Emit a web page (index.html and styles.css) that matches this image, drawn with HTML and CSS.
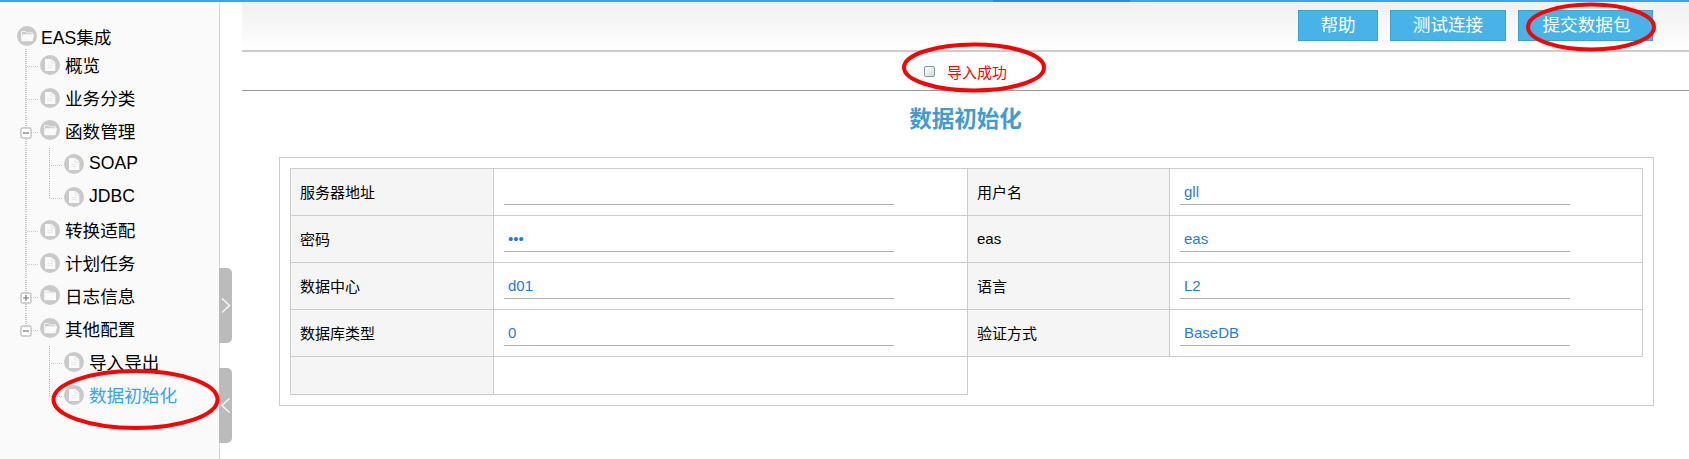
FILE: index.html
```html
<!DOCTYPE html>
<html lang="zh-CN">
<head>
<meta charset="utf-8">
<title>数据初始化</title>
<link rel="stylesheet" href="styles.css">
</head>
<body>
<svg class="defs" width="0" height="0">
  <symbol id="doc" viewBox="0 0 20 20"><circle cx="10" cy="10" r="10" fill="#c9c9c9"/><path d="M5 4h6.5l3.8 3.6V16H5z" fill="#fafafa"/><path d="M11.2 4.3v3.8h3.9" fill="none" stroke="#e4e4e4"/><path d="M7.5 10.5h5M7.5 12.5h5" stroke="#e9e9e9"/></symbol>
  <symbol id="open" viewBox="0 0 20 20"><circle cx="10" cy="10" r="10" fill="#c9c9c9"/><path d="M4.5 13.5V5.5h4l1 1.3h6v1.4" fill="none" stroke="#f2f2f2"/><path d="M5.6 8.3h11.6l-1.7 6.9H4.3z" fill="#fafafa"/></symbol>
  <symbol id="closed" viewBox="0 0 20 20"><circle cx="10" cy="10" r="10" fill="#c9c9c9"/><path d="M4.2 5.2h4.4l1 1.5h6.2v1H4.2z" fill="#f2f2f2"/><path d="M4.2 8h11.8v7.2H4.2z" fill="#fafafa"/></symbol>
  <symbol id="minus" viewBox="0 0 12 12"><rect x="1" y="1" width="10" height="10" rx="1.5" fill="#fff" stroke="#c4c4c4" stroke-width="1.4"/><path d="M3 6h6" stroke="#777" stroke-width="1.2"/></symbol>
  <symbol id="plus" viewBox="0 0 12 12"><rect x="1" y="1" width="10" height="10" rx="1.5" fill="#fff" stroke="#c4c4c4" stroke-width="1.4"/><path d="M3 6h6M6 3v6" stroke="#777" stroke-width="1.2"/></symbol>
</svg>
<div class="topbar"><span class="topbar-active"></span></div>
<div class="layout">
  <nav class="sidebar">
    <div class="root"><svg class="icon"><use href="#open"/></svg><span>EAS集成</span></div>
    <ul class="tree">
      <li class="node"><svg class="icon"><use href="#doc"/></svg><span>概览</span></li>
      <li class="node"><svg class="icon"><use href="#doc"/></svg><span>业务分类</span></li>
      <li class="node folder"><svg class="toggle"><use href="#minus"/></svg><svg class="icon"><use href="#open"/></svg><span>函数管理</span></li>
      <li class="node child latin"><svg class="icon"><use href="#doc"/></svg><span>SOAP</span></li>
      <li class="node child last latin"><svg class="icon"><use href="#doc"/></svg><span>JDBC</span></li>
      <li class="node"><svg class="icon"><use href="#doc"/></svg><span>转换适配</span></li>
      <li class="node"><svg class="icon"><use href="#doc"/></svg><span>计划任务</span></li>
      <li class="node folder"><svg class="toggle"><use href="#plus"/></svg><svg class="icon"><use href="#closed"/></svg><span>日志信息</span></li>
      <li class="node folder end"><svg class="toggle"><use href="#minus"/></svg><svg class="icon"><use href="#open"/></svg><span>其他配置</span></li>
      <li class="node child tail"><svg class="icon"><use href="#doc"/></svg><span>导入导出</span></li>
      <li class="node child last tail current"><svg class="icon"><use href="#doc"/></svg><span>数据初始化</span></li>
    </ul>
  </nav>
  <div class="handles">
    <div class="handle"><svg width="13" height="75"><path d="M3 30.5l7.5 7-7.5 7" /></svg></div>
    <div class="handle"><svg width="13" height="75"><path d="M10.5 30.5l-7.5 7 7.5 7" /></svg></div>
  </div>
  <main class="main">
    <header class="toolbar">
      <button class="btn help">帮助</button>
      <button class="btn test">测试连接</button>
      <button class="btn submit">提交数据包</button>
    </header>
    <div class="message"><span class="bullet"></span><span>导入成功</span></div>
    <h1 class="title">数据初始化</h1>
    <section class="panel">
      <table class="form">
        <colgroup><col class="c1"><col class="c2"><col class="c3"><col class="c4"></colgroup>
        <tr><th>服务器地址</th><td><div class="field"></div></td><th>用户名</th><td><div class="field">gll</div></td></tr>
        <tr><th>密码</th><td><div class="field">•••</div></td><th>eas</th><td><div class="field">eas</div></td></tr>
        <tr><th>数据中心</th><td><div class="field">d01</div></td><th>语言</th><td><div class="field">L2</div></td></tr>
        <tr><th>数据库类型</th><td><div class="field">0</div></td><th>验证方式</th><td><div class="field">BaseDB</div></td></tr>
        <tr class="blank"><th></th><td></td></tr>
      </table>
    </section>
  </main>
</div>
<svg class="marks" width="1689" height="459">
  <ellipse cx="135.5" cy="399.5" rx="82" ry="28.5"/>
  <ellipse cx="974" cy="67.5" rx="70" ry="23"/>
  <ellipse cx="1591" cy="27" rx="63" ry="22.5"/>
</svg>
</body>
</html>
```
FILE: styles.css
```css
* { box-sizing: border-box; }
body { margin: 0; height: 459px; overflow: hidden; background: #fff; color: #000; font-family: "Liberation Sans", "Noto Sans CJK SC", sans-serif; }
.defs { position: absolute; }
.topbar { height: 2px; background: #36a5f5; padding-left: 993px; }
.topbar-active { display: block; width: 137px; height: 2px; background: #1f8fe0; }
.layout { display: flex; height: 457px; }
.sidebar { width: 220px; flex: none; background: #fafafa; border-right: 1px solid #d9d9d9; font-size: 17.6px; line-height: 33px; white-space: nowrap; }
.root { display: flex; height: 47px; padding: 24px 0 0 17px; gap: 4px; }
.root span { margin-top: -4px; }
.icon { width: 20px; height: 20px; flex: none; display: block; }
.tree { list-style: none; margin: 0; padding: 0; }
.node { position: relative; display: flex; height: 33px; padding: 6px 0 0 40px; gap: 5px; }
.node span { margin-top: -5px; }
.node.latin span { margin-top: -7px; }
.folder { padding-top: 5px; }
.folder span { margin-top: -4px; }
.node.child { padding-left: 64px; }
.node::before { content: ""; position: absolute; left: 25px; top: 0; width: 14px; height: 32px; background: repeating-linear-gradient(to bottom, #c8c8c8 0 1px, transparent 1px 2px) 0 0 / 2px 100% no-repeat, repeating-linear-gradient(to right, #c8c8c8 0 1px, transparent 1px 2px) 2px 17px / 12px 1px no-repeat; }
.node.child::before { background: repeating-linear-gradient(to bottom, #c8c8c8 0 1px, transparent 1px 2px) 0 0 / 2px 100% no-repeat; }
.node.end::before { height: 18px; }
.node.tail::before { display: none; }
.child::after { content: ""; position: absolute; left: 49px; top: 0; width: 14px; height: 32px; background: repeating-linear-gradient(to bottom, #b0b0b0 0 1px, transparent 1px 2px) 0 0 / 1px 100% no-repeat, repeating-linear-gradient(to right, #c8c8c8 0 1px, transparent 1px 2px) 2px 17px / 12px 1px no-repeat; }
.child.last::after { height: 18px; }
.toggle { position: absolute; left: 20px; top: 12px; width: 12px; height: 12px; z-index: 1; }
.current { color: #36a3f1; }
.handles { width: 22px; flex: none; display: flex; flex-direction: column; gap: 25px; padding-top: 266px; margin-left: -1px; }
.handle { width: 13px; height: 75px; background: #bbb; border-radius: 0 5px 5px 0; }
.handle path { fill: none; stroke: #f4f4f4; stroke-width: 1.6; }
.main { flex: 1; margin-left: 1px; min-width: 0; }
.toolbar { height: 50px; background: linear-gradient(#f0f0f0, #fff 48px); border-bottom: 2px solid #ccc; display: flex; justify-content: flex-end; gap: 12px; padding: 8px 36px 0 0; }
.btn { height: 31px; padding: 0 0 1px; border: 1px solid #38a2d3; background: #47b3e8; color: #fff; font: 17.6px/26px "Liberation Sans", "Noto Sans CJK SC", sans-serif; }
.help { width: 80px; }
.test { width: 116px; }
.submit { width: 135px; padding-left: 2px; }
.message { height: 39px; border-bottom: 1px solid #999; padding-left: 682px; display: flex; align-items: center; gap: 12px; font-size: 15px; color: #f00; }
.bullet { width: 11px; height: 11px; border: 1px solid #7c9ab8; border-radius: 2px; background: linear-gradient(135deg, #fff, #ddd8cc); }
.title { margin: 0; height: 66px; padding-top: 12px; text-align: center; font-size: 22.5px; line-height: 34px; color: #429ccd; }
.panel { margin: 0 35px 0 37px; border: 1px solid #ccc; padding: 10px; height: 249px; }
.form { border-collapse: collapse; table-layout: fixed; width: 1352px; font-size: 15px; }
.c1 { width: 203px; }
.c2 { width: 474px; }
.c3 { width: 202px; }
.c4 { width: 473px; }
.form th, .form td { height: 47px; padding: 0 10px 2px; border: 1px solid #ccc; text-align: left; font-weight: 400; }
.form th { background: #f5f5f5; padding-left: 9px; }
.form .blank th, .form .blank td { height: 38px; }
.field { width: 390px; height: 27px; padding: 0 4px; border-bottom: 1px solid #b0b0b0; line-height: 27px; color: #1f7ddb; }
.marks { position: absolute; left: 0; top: 0; fill: none; stroke: #f00; stroke-width: 4; pointer-events: none; }
```
